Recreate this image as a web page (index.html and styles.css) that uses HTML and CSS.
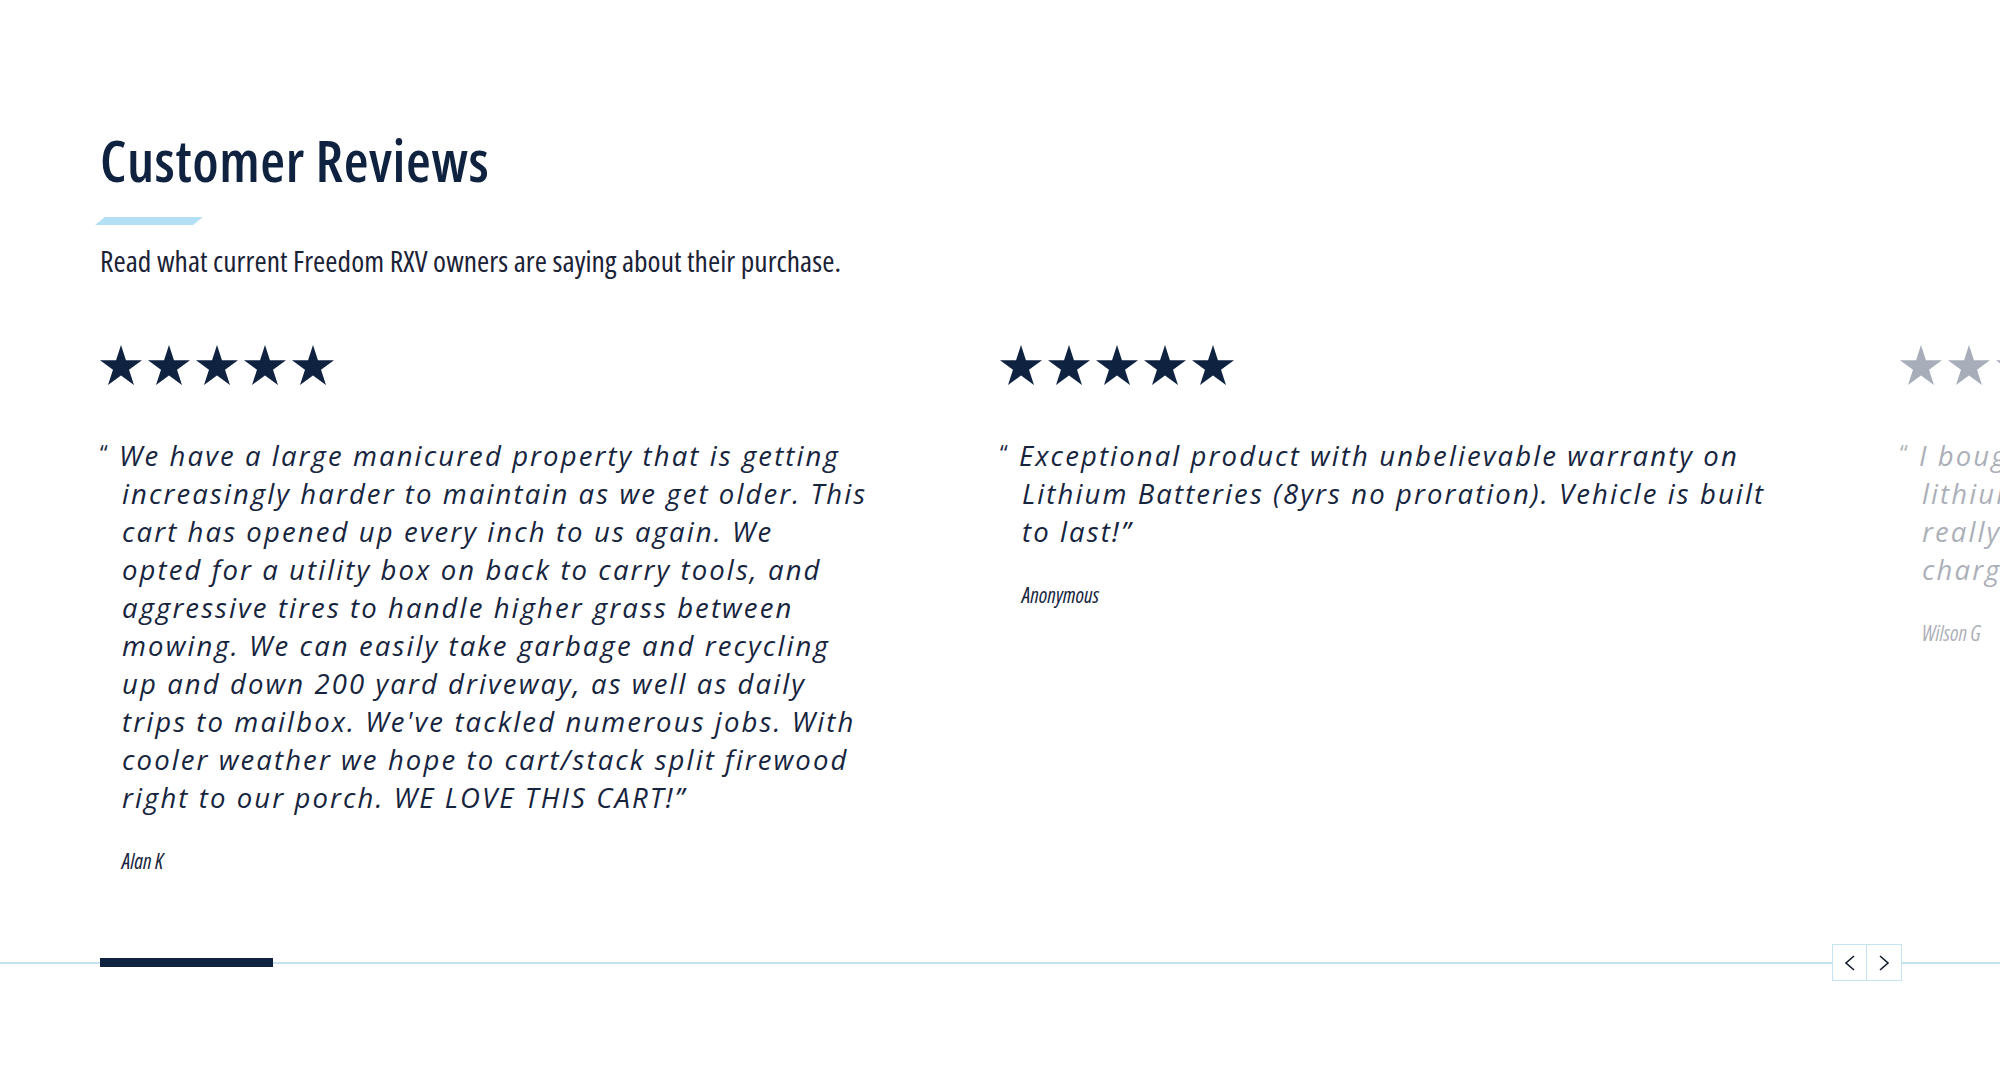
FILE: index.html
```html
<!DOCTYPE html>
<html lang="en">
<head>
<meta charset="utf-8">
<title>Customer Reviews</title>
<link rel="stylesheet" href="styles.css">
</head>
<body>
<section class="reviews">
  <header class="reviews-head">
    <h2 class="reviews-title">Customer Reviews</h2>
    <span class="reviews-accent"></span>
    <p class="reviews-sub">Read what current Freedom RXV owners are saying about their purchase.</p>
  </header>

  <div class="slider">
    <div class="slider-track">
      <article class="review">
        <div class="stars">
          <svg class="star" viewBox="0 0 100 95.1"><polygon points="50,0 61.8,36.3 100,36.3 69.1,58.8 80.9,95.1 50,72.7 19.1,95.1 30.9,58.8 0,36.3 38.2,36.3"/></svg>
          <svg class="star" viewBox="0 0 100 95.1"><polygon points="50,0 61.8,36.3 100,36.3 69.1,58.8 80.9,95.1 50,72.7 19.1,95.1 30.9,58.8 0,36.3 38.2,36.3"/></svg>
          <svg class="star" viewBox="0 0 100 95.1"><polygon points="50,0 61.8,36.3 100,36.3 69.1,58.8 80.9,95.1 50,72.7 19.1,95.1 30.9,58.8 0,36.3 38.2,36.3"/></svg>
          <svg class="star" viewBox="0 0 100 95.1"><polygon points="50,0 61.8,36.3 100,36.3 69.1,58.8 80.9,95.1 50,72.7 19.1,95.1 30.9,58.8 0,36.3 38.2,36.3"/></svg>
          <svg class="star" viewBox="0 0 100 95.1"><polygon points="50,0 61.8,36.3 100,36.3 69.1,58.8 80.9,95.1 50,72.7 19.1,95.1 30.9,58.8 0,36.3 38.2,36.3"/></svg>
        </div>
        <blockquote class="review-text"><span class="mark">“</span>We have a large manicured property that is getting<br>increasingly harder to maintain as we get older. This<br>cart has opened up every inch to us again. We<br>opted for a utility box on back to carry tools, and<br>aggressive tires to handle higher grass between<br>mowing. We can easily take garbage and recycling<br>up and down 200 yard driveway, as well as daily<br>trips to mailbox. We've tackled numerous jobs. With<br>cooler weather we hope to cart/stack split firewood<br>right to our porch. WE LOVE THIS CART!”</blockquote>
        <p class="review-author">Alan K</p>
      </article>

      <article class="review">
        <div class="stars">
          <svg class="star" viewBox="0 0 100 95.1"><polygon points="50,0 61.8,36.3 100,36.3 69.1,58.8 80.9,95.1 50,72.7 19.1,95.1 30.9,58.8 0,36.3 38.2,36.3"/></svg>
          <svg class="star" viewBox="0 0 100 95.1"><polygon points="50,0 61.8,36.3 100,36.3 69.1,58.8 80.9,95.1 50,72.7 19.1,95.1 30.9,58.8 0,36.3 38.2,36.3"/></svg>
          <svg class="star" viewBox="0 0 100 95.1"><polygon points="50,0 61.8,36.3 100,36.3 69.1,58.8 80.9,95.1 50,72.7 19.1,95.1 30.9,58.8 0,36.3 38.2,36.3"/></svg>
          <svg class="star" viewBox="0 0 100 95.1"><polygon points="50,0 61.8,36.3 100,36.3 69.1,58.8 80.9,95.1 50,72.7 19.1,95.1 30.9,58.8 0,36.3 38.2,36.3"/></svg>
          <svg class="star" viewBox="0 0 100 95.1"><polygon points="50,0 61.8,36.3 100,36.3 69.1,58.8 80.9,95.1 50,72.7 19.1,95.1 30.9,58.8 0,36.3 38.2,36.3"/></svg>
        </div>
        <blockquote class="review-text"><span class="mark">“</span>Exceptional product with unbelievable warranty on<br>Lithium Batteries (8yrs no proration). Vehicle is built<br>to last!”</blockquote>
        <p class="review-author">Anonymous</p>
      </article>

      <article class="review review-faded">
        <div class="stars">
          <svg class="star" viewBox="0 0 100 95.1"><polygon points="50,0 61.8,36.3 100,36.3 69.1,58.8 80.9,95.1 50,72.7 19.1,95.1 30.9,58.8 0,36.3 38.2,36.3"/></svg>
          <svg class="star" viewBox="0 0 100 95.1"><polygon points="50,0 61.8,36.3 100,36.3 69.1,58.8 80.9,95.1 50,72.7 19.1,95.1 30.9,58.8 0,36.3 38.2,36.3"/></svg>
          <svg class="star" viewBox="0 0 100 95.1"><polygon points="50,0 61.8,36.3 100,36.3 69.1,58.8 80.9,95.1 50,72.7 19.1,95.1 30.9,58.8 0,36.3 38.2,36.3"/></svg>
          <svg class="star" viewBox="0 0 100 95.1"><polygon points="50,0 61.8,36.3 100,36.3 69.1,58.8 80.9,95.1 50,72.7 19.1,95.1 30.9,58.8 0,36.3 38.2,36.3"/></svg>
          <svg class="star" viewBox="0 0 100 95.1"><polygon points="50,0 61.8,36.3 100,36.3 69.1,58.8 80.9,95.1 50,72.7 19.1,95.1 30.9,58.8 0,36.3 38.2,36.3"/></svg>
        </div>
        <blockquote class="review-text"><span class="mark">“</span>I bought my Freedom RXV with the<br>lithium battery option and I am<br>really impressed with how long a<br>charge lasts. Great cart!”</blockquote>
        <p class="review-author">Wilson G</p>
      </article>
    </div>
  </div>

  <div class="slider-controls">
    <div class="progress"><span class="progress-bar"></span></div>
    <div class="arrows">
      <button class="arrow arrow-prev" aria-label="Previous">
        <svg viewBox="0 0 12 16"><polyline points="10,1 2,8 10,15"/></svg>
      </button>
      <button class="arrow arrow-next" aria-label="Next">
        <svg viewBox="0 0 12 16"><polyline points="2,1 10,8 2,15"/></svg>
      </button>
    </div>
  </div>
</section>
</body>
</html>
```
FILE: styles.css
```css
html, body {
  margin: 0;
  padding: 0;
  background: #ffffff;
}

body {
  font-family: "Open Sans", "Noto Sans", sans-serif;
  color: #0f2240;
  overflow: hidden;
}

.reviews {
  padding-top: 132px;
  width: 2000px;
}

.reviews-head {
  display: flex;
  flex-direction: column;
  align-items: flex-start;
  padding-left: 100px;
}

.reviews-title {
  margin: 0;
  font-family: "Open Sans", sans-serif;
  font-stretch: 75%;
  font-weight: 600;
  font-size: 57px;
  line-height: 57px;
  letter-spacing: 0.55px;
  color: #0f2240;
}

.reviews-accent {
  display: block;
  width: 98px;
  height: 8px;
  margin-top: 28px;
  margin-left: -5px;
  background: #b4e0f5;
  transform: skewX(-51deg);
  transform-origin: bottom left;
}

.reviews-sub {
  margin: 18px 0 0;
  font-family: "Open Sans", sans-serif;
  font-stretch: 75%;
  font-weight: 400;
  font-size: 29.5px;
  line-height: 35px;
  letter-spacing: 0.05px;
  color: #1b2236;
}

.slider {
  margin-top: 67px;
  padding-left: 100px;
  overflow: hidden;
}

.slider-track {
  display: grid;
  grid-auto-flow: column;
  grid-auto-columns: 800px;
  column-gap: 100px;
  align-items: start;
}

.stars {
  display: flex;
  gap: 6px;
  height: 40px;
}

.star {
  width: 42px;
  height: 40px;
  fill: #0f2240;
}

.review-text {
  margin: 48px 0 0;
  padding-left: 22px;
  font-family: "Open Sans", sans-serif;
  font-style: italic;
  font-weight: 500;
  font-size: 27.5px;
  line-height: 38px;
  letter-spacing: 2.1px;
  color: #16243e;
  white-space: nowrap;
}

.mark {
  display: inline-block;
  width: 19px;
  margin-left: -22px;
  font-size: 22px;
  font-style: normal;
  font-weight: 400;
  letter-spacing: 0;
  vertical-align: 5px;
}

.review-author {
  margin: 33px 0 0;
  padding-left: 22px;
  font-family: "Open Sans", sans-serif;
  font-stretch: 82%;
  font-style: italic;
  font-size: 21px;
  line-height: 22px;
  color: #16243e;
}

.review-faded {
  opacity: 0.36;
}

.slider-controls {
  display: flex;
  align-items: center;
  justify-content: space-between;
  height: 37px;
  margin-top: 72px;
  padding: 0 98px 0 100px;
  background: linear-gradient(#c2e3ef, #c2e3ef) left center / 100% 2px no-repeat;
}

.progress {
  display: flex;
  align-items: center;
}

.progress-bar {
  display: block;
  width: 173px;
  height: 9px;
  background: #0f2240;
}

.arrows {
  display: flex;
  border: 1px solid #c6e4ef;
  background: #ffffff;
}

.arrow {
  display: flex;
  align-items: center;
  justify-content: center;
  width: 34px;
  height: 35px;
  padding: 0;
  margin: 0;
  border: 0;
  background: #ffffff;
  cursor: pointer;
}

.arrow-prev {
  border-right: 1px solid #c6e4ef;
}

.arrow svg {
  width: 12px;
  height: 16px;
  fill: none;
  stroke: #111a2b;
  stroke-width: 1.6;
}
```
